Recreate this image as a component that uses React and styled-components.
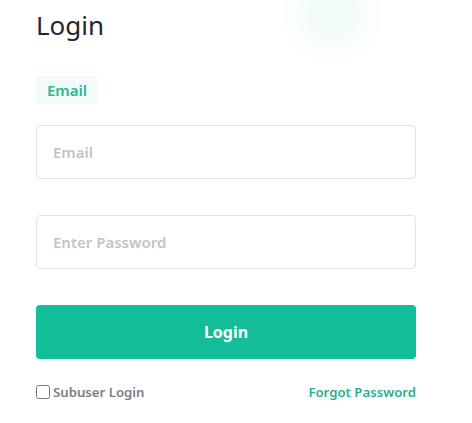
import React from 'react';
import styled, { createGlobalStyle } from 'styled-components';

const GlobalStyle = createGlobalStyle`
  html, body {
    margin: 0;
    padding: 0;
    background: #ffffff;
    font-family: "Noto Sans", "Open Sans", sans-serif;
  }
`

const Page = styled.div`
  position: relative;
  width: 472px;
  height: 423px;
  overflow: hidden;
  background: #ffffff;
`
const Glow = styled.div`
  position: absolute;
  left: 297px;
  top: -22px;
  width: 72px;
  height: 72px;
  border-radius: 50%;
  background: #f1fcfa;
  filter: blur(14px);
`
const Form = styled.form`
  position: relative;
  width: 380px;
  margin-left: 36px;
  padding-top: 5px;
  display: flex;
  flex-direction: column;
`
const Title = styled.h1`
  margin: 0;
  font-size: 26px;
  font-weight: 400;
  line-height: 40px;
  color: #222631;
`
const Tabs = styled.div`
  display: flex;
  margin-top: 31px;
`
const Tab = styled.div`
  padding: 0 11px;
  height: 28px;
  line-height: 28px;
  font-size: 15px;
  font-weight: 600;
  color: #2bb895;
  background: #f1fbf8;
  border-radius: 3px;
`
const Input = styled.input`
  box-sizing: border-box;
  width: 100%;
  height: 54px;
  margin-top: ${p => p.$gap}px;
  padding: 0 16px;
  border: 1px solid #e2e2e2;
  border-radius: 4px;
  font-family: inherit;
  font-size: 15px;
  font-weight: 600;
  color: #333;
  outline: none;
  &::placeholder {
    color: #c4c4c4;
  }
`
const Button = styled.button`
  width: 100%;
  height: 54px;
  margin-top: 36px;
  border: none;
  border-radius: 4px;
  background: #12bd97;
  color: #ffffff;
  font-family: inherit;
  font-size: 16px;
  font-weight: 700;
  cursor: pointer;
`
const Footer = styled.div`
  display: flex;
  justify-content: space-between;
  align-items: center;
  margin-top: 24px;
  font-size: 13.2px;
  font-weight: 600;
`
const Check = styled.label`
  display: flex;
  align-items: center;
  gap: 3px;
  color: #7a7e87;
  input {
    margin: 0;
    width: 14px;
    height: 14px;
  }
`
const Link = styled.a`
  color: #2aae8f;
  text-decoration: none;
`

export default function App() {
  return (
    <Page>
      <GlobalStyle />
      <Glow />
      <Form onSubmit={e => e.preventDefault()}>
        <Title>Login</Title>
        <Tabs>
          <Tab>Email</Tab>
        </Tabs>
        <Input $gap={21} type="email" placeholder="Email" />
        <Input $gap={36} type="password" placeholder="Enter Password" />
        <Button type="submit">Login</Button>
        <Footer>
          <Check>
            <input type="checkbox" />
            Subuser Login
          </Check>
          <Link href="#">Forgot Password</Link>
        </Footer>
      </Form>
    </Page>
  );
}
